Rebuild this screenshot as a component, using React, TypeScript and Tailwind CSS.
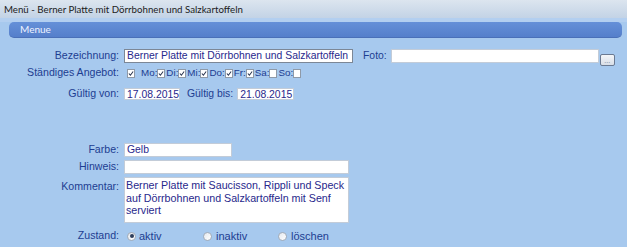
import React from 'react';

const labelCls = 'w-[120px] shrink-0 text-right pr-[1px] text-[10.6px] text-[#1d3d91]';

const Check = ({ on }: { on: boolean }) => (
  <span className="inline-flex w-[8px] h-[9px] bg-white border border-[#8f9aa8] items-center justify-center shrink-0">
    {on && (
      <svg width="7" height="7" viewBox="0 0 7 7">
        <path d="M1 3.5 L2.8 5.5 L6 1.2" stroke="#2a3550" strokeWidth="1.2" fill="none" />
      </svg>
    )}
  </span>
);

const Radio = ({ on }: { on: boolean }) => (
  <span className="inline-flex w-[9px] h-[9px] rounded-full border border-[#a3acb8] bg-gradient-to-br from-[#e4e8ee] to-[#ffffff] items-center justify-center shrink-0">
    {on && <span className="w-[4px] h-[4px] rounded-full bg-[#2d3e5c]" />}
  </span>
);

const Input = ({ w, value, dark }: { w: string; value?: string; dark?: boolean }) => (
  <div
    className={`${w} h-full bg-white border ${
      dark ? 'border-[#7c8796]' : 'border-[#c3ccd8]'
    } overflow-hidden whitespace-nowrap px-[2px] text-[10.4px] leading-[12px] text-[#28288c]`}
  >
    {value}
  </div>
);

export default function App() {
  const days = [
    { d: 'Mo', on: true },
    { d: 'Di', on: true },
    { d: 'Mi', on: true },
    { d: 'Do', on: true },
    { d: 'Fr', on: true },
    { d: 'Sa', on: false },
    { d: 'So', on: false },
  ];

  return (
    <div
      className="w-[627px] h-[247px] overflow-hidden bg-[#a7c9ee] text-[11px]"
      style={{ fontFamily: '"Liberation Sans", Arial, sans-serif' }}
    >
      <div
        className="h-[18px] bg-gradient-to-b from-[#dce5ef] to-[#c3d3e6] flex items-center pl-[4px] text-[9.7px] text-[#1b1b1b]"
        style={{ fontFamily: 'Lato, sans-serif' }}
      >
        Menü - Berner Platte mit Dörrbohnen und Salzkartoffeln
      </div>

      <div className="h-[4px] bg-[#b3cff0]" />

      <div
        className="mx-[9px] mr-[5px] h-[16px] rounded-[5px] bg-gradient-to-b from-[#6590d8] to-[#557fcb] border-b border-[#4a70b8] flex items-center pl-[11px] text-[10px] text-[#eef3ff]"
        style={{ fontFamily: 'Lato, sans-serif' }}
      >
        Menue
      </div>

      <div className="flex flex-col">
        {/* Bezeichnung / Foto */}
        <div className="mt-[11px] h-[14px] flex items-center">
          <div className={labelCls}>Bezeichnung:</div>
          <div className="ml-[4px] h-full flex items-center">
            <Input w="w-[229px]" value="Berner Platte mit Dörrbohnen und Salzkartoffeln" dark />
          </div>
          <div className="ml-[10px] text-[10.4px] text-[#1d3d91]">Foto:</div>
          <div className="ml-[4px] h-full">
            <Input w="w-[208px]" />
          </div>
          <div className="ml-[1px] self-start mt-[5px] w-[15px] h-[12px] rounded-[2px] border border-[#6b7a92] bg-gradient-to-b from-[#f4f6f9] to-[#d8dee7] flex items-end justify-center text-[7px] leading-[8px] text-[#6b7a92]">
            ...
          </div>
        </div>

        {/* Ständiges Angebot */}
        <div className="mt-[4px] h-[12px] flex items-center">
          <div className={labelCls}>Ständiges Angebot:</div>
          <div className="ml-[7px] flex items-center text-[9.8px] text-[#1d3d91]">
            <Check on />
            {days.map((x, i) => (
              <span key={x.d} className="flex items-center">
                <span className={i === 0 ? 'ml-[6px]' : 'ml-[1px]'}>{x.d}:</span>
                <Check on={x.on} />
              </span>
            ))}
          </div>
        </div>

        {/* Gültig */}
        <div className="mt-[9px] h-[12px] flex items-center">
          <div className={labelCls}>Gültig von:</div>
          <div className="ml-[4px] h-full">
            <Input w="w-[56px]" value="17.08.2015" />
          </div>
          <div className="ml-[7px] text-[10.4px] text-[#1d3d91]">Gültig bis:</div>
          <div className="ml-[4px] h-full">
            <Input w="w-[57px]" value="21.08.2015" />
          </div>
        </div>

        {/* Farbe */}
        <div className="mt-[43px] h-[14px] flex items-center">
          <div className={labelCls}>Farbe:</div>
          <div className="ml-[4px] h-full">
            <Input w="w-[108px]" value="Gelb" />
          </div>
        </div>

        {/* Hinweis */}
        <div className="mt-[3px] h-[14px] flex items-center">
          <div className={labelCls}>Hinweis:</div>
          <div className="ml-[4px] h-full">
            <Input w="w-[225px]" />
          </div>
        </div>

        {/* Kommentar */}
        <div className="mt-[3px] h-[46px] flex items-start">
          <div className={`${labelCls} pt-[2px]`}>Kommentar:</div>
          <div className="ml-[4px] w-[225px] h-full bg-white border border-[#c3ccd8] pl-[1px] pt-[1px] text-[10.7px] leading-[12.5px] text-[#28288c]">
            Berner Platte mit Saucisson, Rippli und Speck auf Dörrbohnen und Salzkartoffeln mit Senf serviert
          </div>
        </div>

        {/* Zustand */}
        <div className="mt-[7px] h-[12px] flex items-center">
          <div className={labelCls}>Zustand:</div>
          <div className="ml-[7px] flex items-center text-[11px] text-[#1d3d91]">
            <Radio on />
            <span className="ml-[3px] w-[64px]">aktiv</span>
            <Radio on={false} />
            <span className="ml-[4px] w-[62px]">inaktiv</span>
            <Radio on={false} />
            <span className="ml-[4px]">löschen</span>
          </div>
        </div>
      </div>
    </div>
  );
}
